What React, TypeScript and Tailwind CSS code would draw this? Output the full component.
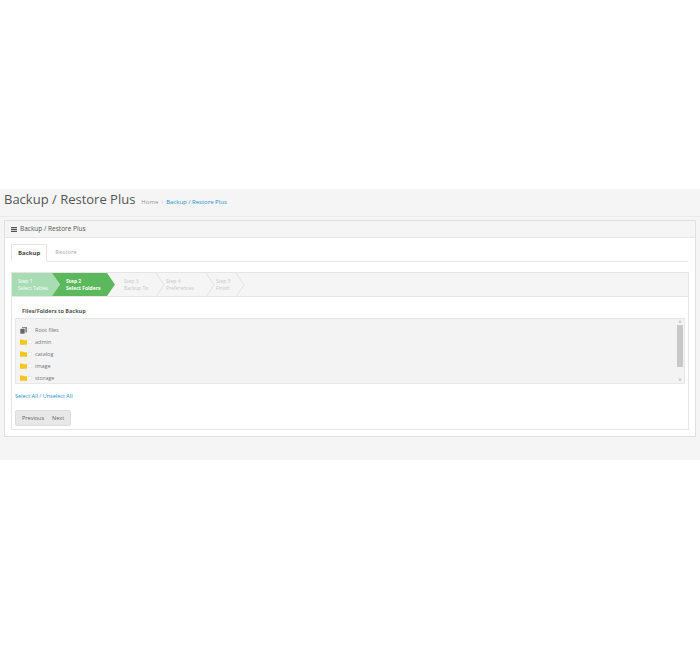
import React from "react";

const Folder = () => (
  <svg width="8" height="6" viewBox="0 0 8 6"><path d="M0 0h3l1 1h4v5H0z" fill="#f5c518" /></svg>
);
const Files = () => (
  <svg width="7" height="7" viewBox="0 0 7 7"><rect x="2" y="0" width="5" height="5.5" fill="#888" /><rect x="0" y="1.5" width="5" height="5.5" fill="#666" stroke="#fff" strokeWidth="0.6" /></svg>
);

const Chev = () => (
  <svg width="9" height="24" viewBox="0 0 9 24" className="absolute right-[-8px] top-0">
    <path d="M0 0 L8 12 L0 24" fill="none" stroke="#ddd" strokeWidth="0.8" />
  </svg>
);

export default function App() {
  const items: [string, boolean][] = [["Root files", true], ["admin", false], ["catalog", false], ["image", false], ["storage", false]];
  return (
    <div className="w-[700px] h-[650px] bg-white text-[#666]" style={{ fontFamily: '"Open Sans", sans-serif' }}>
      <div className="h-[189px]" />
      <div className="bg-[#f5f5f5] h-[271px] pt-[1px]">
        <div className="flex items-baseline h-[27px] px-[4px] border-b border-[#eaeaea]">
          <span className="text-[13px] text-[#555] mt-[1px] leading-[16px]">Backup / Restore Plus</span>
          <span className="text-[6px] text-[#999] ml-[6px]">Home</span>
          <span className="text-[6px] text-[#bbb] mx-[3px]">›</span>
          <span className="text-[6px] text-[#1e91cf]">Backup / Restore Plus</span>
        </div>
        <div className="mx-[4px] mt-[3px] border border-[#e0e0e0] bg-white h-[217px]">
          <div className="h-[17px] bg-[#f5f5f5] border-b border-[#e6e6e6] flex items-center px-[6px] text-[6.5px] text-[#555]">
            <svg width="6" height="5" viewBox="0 0 6 5" className="mr-[3px]"><rect width="6" height="1.2" y="0" fill="#555"/><rect width="6" height="1.2" y="1.9" fill="#555"/><rect width="6" height="1.2" y="3.8" fill="#555"/></svg>
            Backup / Restore Plus
          </div>
          <div className="px-[6px] pt-[6px]">
            <div className="flex border-b border-[#e5e5e5] h-[18px] mr-[1px]">
              <div className="border border-[#e5e5e5] border-b-white bg-white px-[6px] text-[6px] font-bold text-[#444] flex items-center -mb-[1px]">Backup</div>
              <div className="px-[8px] text-[6px] text-[#aaa] flex items-center">Restore</div>
            </div>
            <div className="mt-[10px] border border-[#e5e5e5] h-[158px]">
              <div className="h-[24px] bg-[#f5f5f5] border-b border-[#e5e5e5] flex text-[5px] leading-[7px]">
                <div className="w-[48px] bg-[#a8dcb3] text-white pl-[6px] pt-[5px] [clip-path:polygon(0_0,40px_0,48px_50%,40px_100%,0_100%)]">Step 1<br/>Select Tables</div>
                <div className="w-[63px] -ml-[8px] bg-[#5cb85c] text-white pl-[14px] pt-[5px] font-bold [clip-path:polygon(0_0,55px_0,63px_50%,55px_100%,0_100%,8px_50%)]">Step 2<br/>Select Folders</div>
                {[["Step 3", "Backup To", 42], ["Step 4", "Preferences", 50], ["Step 5", "Finish", 30]].map(([a, b, w]) => (
                  <div key={a as string} className="relative text-[#c8c8c8] pl-[9px] pt-[5px]" style={{ width: w as number }}>
                    {a}<br/>{b}<Chev />
                  </div>
                ))}
              </div>
              <div className="px-[3px]">
                <div className="text-[5.5px] font-bold text-[#555] pl-[7px] pt-[10px] h-[21px]">Files/Folders to Backup</div>
                <div className="bg-[#f3f3f3] border border-[#e8e8e8] h-[66px] relative flex">
                  <div className="flex-1 pl-[4px] pt-[5px]">
                    {items.map(([n, r]) => (
                      <div key={n} className="flex items-center h-[12px] text-[5.5px] text-[#777]">
                        <span className="w-[7px] flex">{r ? <Files /> : <Folder />}</span>
                        <span className="w-[4px] h-[4px] bg-white border border-[#eee] mr-[3px] ml-[1px]" />
                        {n}
                      </div>
                    ))}
                  </div>
                  <div className="w-[8px] flex flex-col items-center text-[5px] text-[#888] leading-[6px]">
                    <span>˄</span>
                    <div className="w-[6px] h-[42px] bg-[#c8c8c8]" />
                    <div className="flex-1" />
                    <span>˅</span>
                  </div>
                </div>
                <div className="text-[5.5px] text-[#1e91cf] mt-[8px]">Select All / Unselect All</div>
                <div className="mt-[10px] inline-flex bg-[#e8e8e8] border border-[#ddd] rounded-[2px] h-[16px] items-center text-[5.5px] text-[#666]">
                  <span className="px-[6px]">Previous</span>
                  <span className="pr-[6px] pl-[2px]">Next</span>
                </div>
              </div>
            </div>
          </div>
        </div>
      </div>
    </div>
  );
}
